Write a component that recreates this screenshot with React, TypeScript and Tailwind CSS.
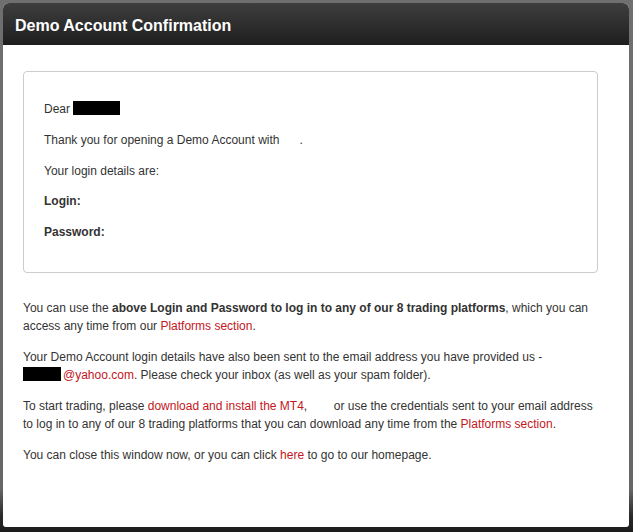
const red = "text-[#c4161c]";

function Redacted({ w }: { w: number }) {
  return (
    <span
      className="inline-block h-[14px] bg-black align-[-2px]"
      style={{ width: w }}
    />
  );
}

export default function App() {
  return (
    <div className="h-[532px] w-[633px] overflow-hidden bg-[linear-gradient(to_bottom,#6f6f6f_0%,#666666_92%,#2a2a2a_97%,#1c1c1c_100%)] pl-[3px] pr-[4px] pt-[3px] font-['Liberation_Sans',Arial,sans-serif]">
      <div className="flex h-[524px] flex-col overflow-hidden rounded-t-[6px] rounded-b-[3px] bg-white">
        <div className="flex h-[42px] shrink-0 items-center bg-[linear-gradient(to_bottom,#3e3e3e,#1e1e1e)] px-[12px] pt-[3px]">
          <h1 className="text-[16px] font-bold text-white">Demo Account Confirmation</h1>
        </div>

        <div className="pl-[20px] pr-[31px] pt-[26px] text-[12px] text-[#333333]">
          <div className="h-[202px] rounded-[4px] border border-[#cccccc] pl-[20px] pt-[29px]">
            <div className="flex flex-col gap-[15.8px] leading-[15px]">
              <p>
                Dear <Redacted w={47} />
              </p>
              <p>Thank you for opening a Demo Account with {"\u00a0\u00a0\u00a0\u00a0\u00a0"}.</p>
              <p>Your login details are:</p>
              <p className="font-bold">Login:</p>
              <p className="font-bold">Password:</p>
            </div>
          </div>

          <div className="mt-[26px] flex flex-col gap-[13px] leading-[18px]">
            <p>
              You can use the <b>above Login and Password to log in to any of our 8 trading platforms</b>,
              which you can access any time from our <span className={red}>Platforms section</span>.
            </p>
            <p>
              Your Demo Account login details have also been sent to the email address you have provided us -
              <br />
              <Redacted w={38} />
              <span className={`ml-[2px] ${red}`}>@yahoo.com</span>. Please check your inbox (as well as your spam
              folder).
            </p>
            <p>
              To start trading, please <span className={red}>download and install the MT4</span>,
              {"\u00a0\u00a0\u00a0\u00a0\u00a0\u00a0\u00a0 "}or use the credentials sent to your email address to log in to
              any of our 8 trading platforms that you can download any time from the{" "}
              <span className={red}>Platforms section</span>.
            </p>
            <p>
              You can close this window now, or you can click <span className={red}>here</span> to go to our
              homepage.
            </p>
          </div>
        </div>
      </div>
    </div>
  );
}
